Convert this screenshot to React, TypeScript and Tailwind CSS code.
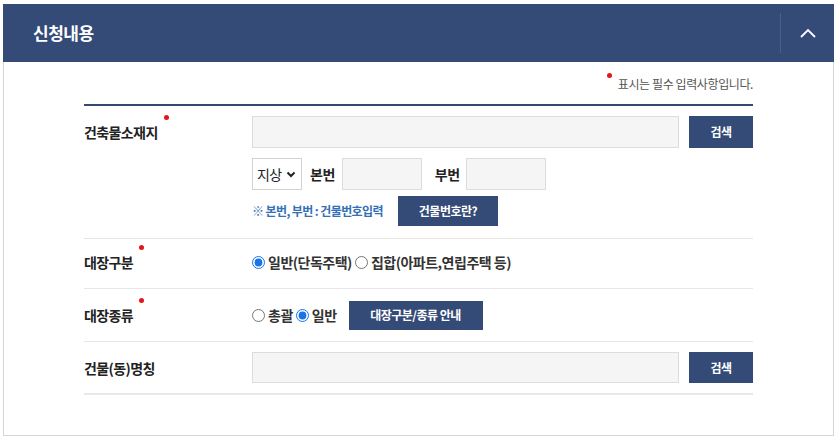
import React from "react";

const navy = "bg-[#344b77]";

function Dot({ className }: { className: string }) {
  return <span className={`absolute w-[5px] h-[5px] rounded-full bg-[#e5141b] ${className}`} />;
}

function Label({ text, required }: { text: string; required?: boolean }) {
  return (
    <span className="relative text-[14px] font-bold tracking-[-0.6px] text-[#222] leading-[20px]">
      {text}
      {required && <Dot className="-right-[11px] -top-[7px]" />}
    </span>
  );
}

function Radio({ checked, label }: { checked: boolean; label: string }) {
  return (
    <label className="flex items-center">
      <input
        type="radio"
        checked={checked}
        onChange={() => {}}
        className="m-0 w-[13px] h-[13px] accent-[#1a73e8]"
      />
      <span className="ml-[3px] text-[14px] font-semibold tracking-[-0.5px] text-[#333]">{label}</span>
    </label>
  );
}

function NavyButton({ text, w, h }: { text: string; w: string; h: string }) {
  return (
    <button className={`${navy} ${w} ${h} text-white text-[12px] font-bold tracking-[-0.5px] flex items-center justify-center`}>
      {text}
    </button>
  );
}

export default function App() {
  return (
    <div className="w-[839px] h-[441px] bg-white pt-[4px] font-['Noto_Sans_CJK_KR','Noto_Sans',sans-serif]">
      <div className="ml-[3px] w-[831px]">
        {/* Header */}
        <div className={`${navy} h-[58px] flex items-center`}>
          <h2 className="pl-[30px] text-[17px] font-bold tracking-[-0.5px] text-white flex-1">신청내용</h2>
          <div className="w-px h-[40px] bg-[#4b6089]" />
          <button className="w-[53px] h-full flex items-center justify-center">
            <svg width="16" height="10" viewBox="0 0 16 10" fill="none" stroke="white" strokeWidth="1.8">
              <path d="M1 9 L8 2 L15 9" />
            </svg>
          </button>
        </div>

        {/* Body */}
        <div className="h-[374px] border-x border-b border-[#d6d6d6] px-[80px]">
          <div className="flex justify-end pt-[13px] pb-[11px]">
            <span className="relative text-[12px] leading-[18px] tracking-[-0.4px] text-[#555]">
              <Dot className="-left-[11px] -top-[2px]" />
              표시는 필수 입력사항입니다.
            </span>
          </div>
          <div className="h-[2px] bg-[#34496f]" />

          {/* 건축물소재지 */}
          <div className="flex pt-[10px] pb-[12px] border-b border-[#e6e6e6]">
            <div className="w-[168px] h-[32px] flex items-center">
              <Label text="건축물소재지" required />
            </div>
            <div className="flex-1 flex flex-col">
              <div className="flex gap-[10px]">
                <div className="flex-1 h-[32px] bg-[#f5f5f5] border border-[#dcdcdc]" />
                <NavyButton text="검색" w="w-[64px]" h="h-[32px]" />
              </div>
              <div className="flex items-center mt-[10px] h-[32px]">
                <div className="w-[50px] h-[32px] border border-[#d2d2d2] bg-white flex items-center pl-[4px] gap-[4px]">
                  <span className="text-[14px] text-[#222] tracking-[-0.6px]">지상</span>
                  <svg width="10" height="7" viewBox="0 0 10 7" fill="none" stroke="#222" strokeWidth="2">
                    <path d="M1.5 1.5 L5 5 L8.5 1.5" />
                  </svg>
                </div>
                <span className="ml-[8px] text-[14px] font-bold tracking-[-0.5px] text-[#222]">본번</span>
                <div className="ml-[7px] w-[80px] h-[32px] bg-[#f5f5f5] border border-[#dcdcdc]" />
                <span className="ml-[13px] text-[14px] font-bold tracking-[-0.5px] text-[#222]">부번</span>
                <div className="ml-[6px] w-[80px] h-[32px] bg-[#f5f5f5] border border-[#dcdcdc]" />
              </div>
              <div className="flex items-center mt-[6px]">
                <span className="w-[146px] text-[12px] font-bold tracking-[-0.6px] text-[#3470b8]">※ 본번, 부번 : 건물번호입력</span>
                <NavyButton text="건물번호란?" w="w-[100px]" h="h-[30px]" />
              </div>
            </div>
          </div>

          {/* 대장구분 */}
          <div className="flex items-center h-[50px] pb-[3px] border-b border-[#e6e6e6]">
            <div className="w-[168px] flex items-center">
              <Label text="대장구분" required />
            </div>
            <div className="flex items-center gap-[3px]">
              <Radio checked label="일반(단독주택)" />
              <Radio checked={false} label="집합(아파트,연립주택 등)" />
            </div>
          </div>

          {/* 대장종류 */}
          <div className="flex items-center h-[53px] border-b border-[#e6e6e6]">
            <div className="w-[168px] flex items-center">
              <Label text="대장종류" required />
            </div>
            <div className="flex items-center gap-[3px]">
              <Radio checked={false} label="총괄" />
              <Radio checked label="일반" />
            </div>
            <div className="ml-[12px]">
              <NavyButton text="대장구분/종류 안내" w="w-[134px]" h="h-[29px]" />
            </div>
          </div>

          {/* 건물(동)명칭 */}
          <div className="flex items-center h-[53px] border-b-2 border-[#e8e8e8]">
            <div className="w-[168px] flex items-center">
              <Label text="건물(동)명칭" />
            </div>
            <div className="flex-1 flex gap-[10px]">
              <div className="flex-1 h-[31px] bg-[#f5f5f5] border border-[#dcdcdc]" />
              <NavyButton text="검색" w="w-[64px]" h="h-[31px]" />
            </div>
          </div>
        </div>
      </div>
    </div>
  );
}
